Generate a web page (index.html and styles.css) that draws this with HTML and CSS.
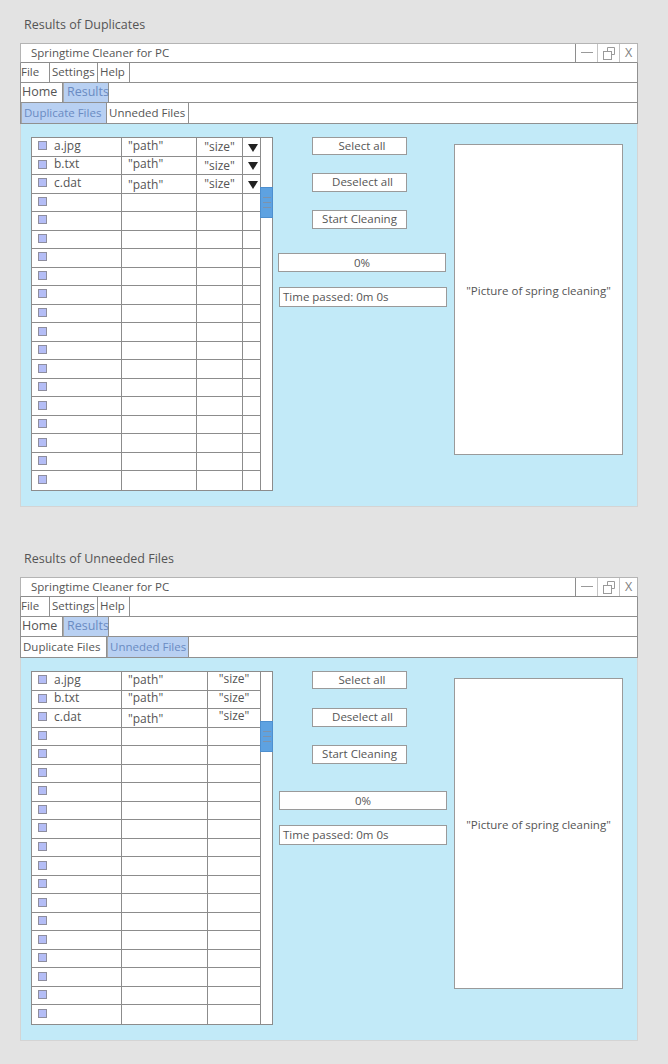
FILE: index.html
```html
<!DOCTYPE html>
<html>
<head>
<meta charset="utf-8">
<link rel="stylesheet" href="styles.css">
</head>
<body>
<section class="section">
  <h2 class="heading">Results of Duplicates</h2>
  <div class="window">
    <div class="bar titlebar">
      <span class="title">Springtime Cleaner for PC</span>
      <div class="winctl">
        <span class="ctl ctl-min"><svg width="21" height="18" viewBox="0 0 21 18"><path d="M5 8.5H17" stroke="#9a9a9a" stroke-width="1"/></svg></span>
        <span class="ctl ctl-max"><svg width="21" height="18" viewBox="0 0 21 18"><rect x="5.5" y="7.5" width="8" height="8" fill="none" stroke="#9a9a9a"/><path d="M9.5 7.5V3.5H16.5V10.5H13.5" fill="none" stroke="#9a9a9a"/></svg></span>
        <span class="ctl ctl-close">X</span>
      </div>
    </div>
    <div class="bar menubar">
      <span class="mi w-file">File</span><span class="mi w-settings">Settings</span><span class="mi w-help">Help</span>
    </div>
    <div class="bar navbar">
      <span class="ni w-home">Home</span><span class="ni w-results active">Results</span>
    </div>
    <div class="bar tabbar">
      <span class="ti w-dup active">Duplicate Files</span><span class="ti w-unn">Unneded Files</span>
    </div>
    <div class="content">
      <div class="table dup">
        <div class="grid">
          <div class="row"><div class="cell c1"><i class="cb"></i>a.jpg</div><div class="cell c2">"path"</div><div class="cell c3">"size"</div><div class="cell c4"><i class="tri"></i></div></div>
          <div class="row"><div class="cell c1"><i class="cb"></i>b.txt</div><div class="cell c2">"path"</div><div class="cell c3">"size"</div><div class="cell c4"><i class="tri"></i></div></div>
          <div class="row"><div class="cell c1"><i class="cb"></i>c.dat</div><div class="cell c2 low">"path"</div><div class="cell c3">"size"</div><div class="cell c4"><i class="tri"></i></div></div>
          <div class="row"><div class="cell c1"><i class="cb"></i></div><div class="cell"></div><div class="cell"></div><div class="cell"></div></div>
          <div class="row"><div class="cell c1"><i class="cb"></i></div><div class="cell"></div><div class="cell"></div><div class="cell"></div></div>
          <div class="row"><div class="cell c1"><i class="cb"></i></div><div class="cell"></div><div class="cell"></div><div class="cell"></div></div>
          <div class="row"><div class="cell c1"><i class="cb"></i></div><div class="cell"></div><div class="cell"></div><div class="cell"></div></div>
          <div class="row"><div class="cell c1"><i class="cb"></i></div><div class="cell"></div><div class="cell"></div><div class="cell"></div></div>
          <div class="row"><div class="cell c1"><i class="cb"></i></div><div class="cell"></div><div class="cell"></div><div class="cell"></div></div>
          <div class="row"><div class="cell c1"><i class="cb"></i></div><div class="cell"></div><div class="cell"></div><div class="cell"></div></div>
          <div class="row"><div class="cell c1"><i class="cb"></i></div><div class="cell"></div><div class="cell"></div><div class="cell"></div></div>
          <div class="row"><div class="cell c1"><i class="cb"></i></div><div class="cell"></div><div class="cell"></div><div class="cell"></div></div>
          <div class="row"><div class="cell c1"><i class="cb"></i></div><div class="cell"></div><div class="cell"></div><div class="cell"></div></div>
          <div class="row"><div class="cell c1"><i class="cb"></i></div><div class="cell"></div><div class="cell"></div><div class="cell"></div></div>
          <div class="row"><div class="cell c1"><i class="cb"></i></div><div class="cell"></div><div class="cell"></div><div class="cell"></div></div>
          <div class="row"><div class="cell c1"><i class="cb"></i></div><div class="cell"></div><div class="cell"></div><div class="cell"></div></div>
          <div class="row"><div class="cell c1"><i class="cb"></i></div><div class="cell"></div><div class="cell"></div><div class="cell"></div></div>
          <div class="row"><div class="cell c1"><i class="cb"></i></div><div class="cell"></div><div class="cell"></div><div class="cell"></div></div>
          <div class="row"><div class="cell c1"><i class="cb"></i></div><div class="cell"></div><div class="cell"></div><div class="cell"></div></div>
        </div>
        <div class="scroll"><div class="thumb"><i></i><i></i><i></i></div></div>
      </div>
      <div class="side">
        <div class="btn b-select">Select all</div>
        <div class="btn b-deselect">Deselect all</div>
        <div class="btn b-start">Start Cleaning</div>
        <div class="progress">0%</div>
        <div class="timer">Time passed: 0m 0s</div>
      </div>
      <div class="picture">"Picture of spring cleaning"</div>
    </div>
  </div>
</section>

<section class="section">
  <h2 class="heading">Results of Unneeded Files</h2>
  <div class="window">
    <div class="bar titlebar">
      <span class="title">Springtime Cleaner for PC</span>
      <div class="winctl">
        <span class="ctl ctl-min"><svg width="21" height="18" viewBox="0 0 21 18"><path d="M5 8.5H17" stroke="#9a9a9a" stroke-width="1"/></svg></span>
        <span class="ctl ctl-max"><svg width="21" height="18" viewBox="0 0 21 18"><rect x="5.5" y="7.5" width="8" height="8" fill="none" stroke="#9a9a9a"/><path d="M9.5 7.5V3.5H16.5V10.5H13.5" fill="none" stroke="#9a9a9a"/></svg></span>
        <span class="ctl ctl-close">X</span>
      </div>
    </div>
    <div class="bar menubar">
      <span class="mi w-file">File</span><span class="mi w-settings">Settings</span><span class="mi w-help">Help</span>
    </div>
    <div class="bar navbar">
      <span class="ni w-home">Home</span><span class="ni w-results active">Results</span>
    </div>
    <div class="bar tabbar">
      <span class="ti w-dup">Duplicate Files</span><span class="ti w-unn active">Unneded Files</span>
    </div>
    <div class="content">
      <div class="table unn">
        <div class="grid">
          <div class="row"><div class="cell c1"><i class="cb"></i>a.jpg</div><div class="cell c2">"path"</div><div class="cell c3 high">"size"</div></div>
          <div class="row"><div class="cell c1"><i class="cb"></i>b.txt</div><div class="cell c2">"path"</div><div class="cell c3 high">"size"</div></div>
          <div class="row"><div class="cell c1"><i class="cb"></i>c.dat</div><div class="cell c2 low">"path"</div><div class="cell c3 high">"size"</div></div>
          <div class="row"><div class="cell c1"><i class="cb"></i></div><div class="cell"></div><div class="cell"></div></div>
          <div class="row"><div class="cell c1"><i class="cb"></i></div><div class="cell"></div><div class="cell"></div></div>
          <div class="row"><div class="cell c1"><i class="cb"></i></div><div class="cell"></div><div class="cell"></div></div>
          <div class="row"><div class="cell c1"><i class="cb"></i></div><div class="cell"></div><div class="cell"></div></div>
          <div class="row"><div class="cell c1"><i class="cb"></i></div><div class="cell"></div><div class="cell"></div></div>
          <div class="row"><div class="cell c1"><i class="cb"></i></div><div class="cell"></div><div class="cell"></div></div>
          <div class="row"><div class="cell c1"><i class="cb"></i></div><div class="cell"></div><div class="cell"></div></div>
          <div class="row"><div class="cell c1"><i class="cb"></i></div><div class="cell"></div><div class="cell"></div></div>
          <div class="row"><div class="cell c1"><i class="cb"></i></div><div class="cell"></div><div class="cell"></div></div>
          <div class="row"><div class="cell c1"><i class="cb"></i></div><div class="cell"></div><div class="cell"></div></div>
          <div class="row"><div class="cell c1"><i class="cb"></i></div><div class="cell"></div><div class="cell"></div></div>
          <div class="row"><div class="cell c1"><i class="cb"></i></div><div class="cell"></div><div class="cell"></div></div>
          <div class="row"><div class="cell c1"><i class="cb"></i></div><div class="cell"></div><div class="cell"></div></div>
          <div class="row"><div class="cell c1"><i class="cb"></i></div><div class="cell"></div><div class="cell"></div></div>
          <div class="row"><div class="cell c1"><i class="cb"></i></div><div class="cell"></div><div class="cell"></div></div>
          <div class="row"><div class="cell c1"><i class="cb"></i></div><div class="cell"></div><div class="cell"></div></div>
        </div>
        <div class="scroll"><div class="thumb"><i></i><i></i><i></i></div></div>
      </div>
      <div class="side side2">
        <div class="btn b-select">Select all</div>
        <div class="btn b-deselect">Deselect all</div>
        <div class="btn b-start">Start Cleaning</div>
        <div class="progress">0%</div>
        <div class="timer">Time passed: 0m 0s</div>
      </div>
      <div class="picture">"Picture of spring cleaning"</div>
    </div>
  </div>
</section>
</body>
</html>
```

FILE: styles.css
```css
* { box-sizing: border-box; }

body {
  margin: 0;
  background: #e3e3e3;
  font-family: "Open Sans", "Noto Sans", sans-serif;
  color: #555;
  width: 668px;
  height: 1064px;
  overflow: hidden;
}

.section { padding-top: 16px; }
.section + .section { margin-top: 27px; }

.heading {
  margin: 0 0 9px 24px;
  font-size: 12.5px;
  line-height: 18px;
  font-weight: normal;
  color: #555;
}

.window {
  margin-left: 20px;
  width: 618px;
}

.bar {
  display: flex;
  align-items: stretch;
  background: #fff;
  border: 1px solid #909090;
  border-top: none;
}

.titlebar {
  height: 20px;
  border: 1px solid #b4b4b4;
  border-bottom-color: #8c8c8c;
}
.title {
  flex: 1;
  padding-left: 10px;
  font-size: 11.5px;
  line-height: 18px;
}
.winctl { display: flex; }
.ctl {
  display: flex;
  align-items: center;
  justify-content: center;
  border-left: 1px solid #a8a8a8;
  height: 18px;
}
.ctl-min { width: 22px; border-left-color: #8e8e8e; }
.ctl-max { width: 22px; border-left-color: #c4c4c4; }
.ctl-close {
  width: 18px;
  border-left-color: #c4c4c4;
  font-size: 12.5px;
  line-height: 18px;
  color: #808080;
  font-family: "Open Sans", sans-serif;
  font-weight: 400;
}

.menubar { height: 20px; }
.navbar { height: 20px; }
.tabbar { height: 21px; }

.mi, .ni, .ti {
  border-right: 1px solid #909090;
  font-size: 11.5px;
  line-height: 18px;
  padding-left: 1px;
  white-space: nowrap;
}
.ni { font-size: 12.5px; }
.mi { padding-left: 0; }
.w-file { width: 29px; }
.w-settings { width: 48px; padding-left: 2px; }
.w-help { width: 32px; padding-left: 2px; }
.w-home { width: 42px; }
.w-results { width: 46px; padding-left: 3px; }
.w-dup { width: 86px; padding-left: 2px; line-height: 20px; }
.w-unn { width: 82px; padding-left: 2px; line-height: 20px; }
.active {
  background: #b8d0f2;
  color: #6a8bc2;
  border-left: 1px solid #a8a8a8;
}

.content {
  display: flex;
  align-items: flex-start;
  height: 383px;
  background: #c2eaf8;
  border: 1px solid #d4d4d4;
  border-top: none;
  padding: 13px 0 0 10px;
}

.table {
  display: flex;
  height: 354px;
  border: 1px solid #8c8c8c;
  border-right: none;
  background: #fff;
}
.grid {
  display: grid;
  grid-template-rows: repeat(19, minmax(0, 1fr));
}
.row {
  display: grid;
  min-height: 0;
  border-bottom: 1px solid #8c8c8c;
}
.row:last-child { border-bottom: none; }
.dup .row { grid-template-columns: 90px 75px 46px 18px; }
.unn .row { grid-template-columns: 90px 86px 53px; }

.cell {
  border-right: 1px solid #8c8c8c;
  font-size: 12px;
  line-height: 14px;
  min-height: 0;
  display: flex;
  align-items: center;
  white-space: nowrap;
}
.c1 { padding-left: 6px; padding-bottom: 2px; }
.c2 { padding-left: 6px; padding-bottom: 2px; }
.c3 { justify-content: center; padding-top: 1px; }
.c3.high { padding-top: 0; padding-bottom: 3px; }
.c2.low { padding-top: 3px; padding-bottom: 0; }
.c4 { justify-content: center; padding-top: 2px; padding-left: 2px; }

.cb {
  display: inline-block;
  width: 9px;
  height: 9px;
  background: #b4bdf6;
  border: 1px solid #8e8e9e;
  margin-right: 7px;
  flex: none;
}

.tri {
  display: block;
  width: 0;
  height: 0;
  border-left: 5px solid transparent;
  border-right: 5px solid transparent;
  border-top: 8px solid #222;
}

.scroll {
  width: 12px;
  border-right: 1px solid #8c8c8c;
  background: #fff;
}
.thumb {
  margin-top: 49px;
  margin-left: -1px;
  width: 13px;
  height: 31px;
  background: #5ea2e1;
  border: 1px solid #4d8fcf;
  display: flex;
  flex-direction: column;
  align-items: center;
  justify-content: center;
  gap: 4px;
}
.thumb i {
  display: block;
  width: 8px;
  height: 1px;
  background: #7d93ab;
}

.side {
  display: flex;
  flex-direction: column;
  align-items: flex-start;
  width: 169px;
  margin-left: 5px;
}
.btn {
  margin-left: 34px;
  width: 95px;
  height: 18px;
  background: #fff;
  border: 1px solid #9a9a9a;
  font-size: 11.5px;
  line-height: 16px;
  text-align: center;
}
.b-select { padding-left: 5px; }
.b-deselect { margin-top: 18px; height: 19px; padding-left: 6px; }
.b-start { margin-top: 18px; height: 19px; }
.progress {
  margin-top: 24px;
  width: 168px;
  height: 19px;
  background: #fff;
  border: 1px solid #9a9a9a;
  font-size: 11.5px;
  line-height: 17px;
  text-align: center;
}
.timer {
  margin-top: 15px;
  margin-left: 1px;
  width: 168px;
  height: 20px;
  background: #fff;
  border: 1px solid #9a9a9a;
  font-size: 11.5px;
  line-height: 18px;
  padding-left: 3px;
}
.side2 .b-deselect { margin-top: 19px; }
.side2 .progress { margin-top: 27px; margin-left: 1px; }

.picture {
  margin-left: 7px;
  margin-top: 7px;
  width: 169px;
  height: 311px;
  background: #fff;
  border: 1px solid #9a9a9a;
  font-size: 11.5px;
  line-height: 18px;
  text-align: center;
  padding-top: 137px;
  white-space: nowrap;
}
```
